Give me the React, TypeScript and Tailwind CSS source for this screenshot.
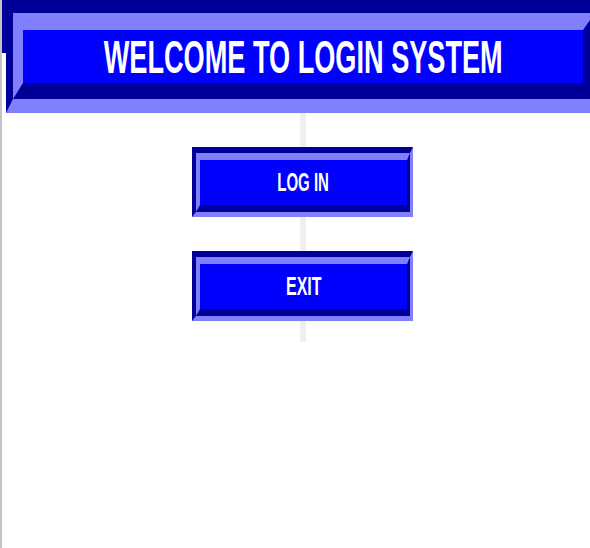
import React from 'react';

const font = { fontFamily: '"Liberation Sans", Arial, sans-serif' };

const BevelButton: React.FC<{ label: string; squeeze: string }> = ({ label, squeeze }) => (
  <button
    className="relative z-10 block border-t-[6px] border-l-[4px] border-b-[5px] border-r-[3px] border-t-[#000099] border-l-[#000099] border-b-[#8080ff] border-r-[#8080ff] p-0"
  >
    <div className="border-t-[7px] border-l-[4px] border-b-[7px] border-r-[3px] border-t-[#8080ff] border-l-[#8080ff] border-b-[#000099] border-r-[#000099]">
      <div className="w-[207px] h-[45px] bg-[#0000ff] flex items-center justify-center">
        <span className={`inline-block text-white font-bold text-[25px] leading-none ${squeeze}`} style={font}>
          {label}
        </span>
      </div>
    </div>
  </button>
);

export default function App() {
  return (
    <div className="w-[590px] h-[548px] overflow-hidden bg-white flex">
      {/* sliver of the window behind */}
      <div className="w-[2px] h-full bg-[#c4c4c4] shrink-0" />

      <div className="relative flex-1 flex flex-col">
        <header className="flex items-start">
          <div className="w-[4px] h-[53px] bg-[#000099] shrink-0" />
          <div className="w-[603px] shrink-0 border-t-[13px] border-l-[7px] border-b-[14px] border-r-[14px] border-t-[#000099] border-l-[#000099] border-b-[#8080ff] border-r-[#8080ff]">
            <div className="border-t-[17px] border-l-[10px] border-b-[16px] border-r-[12px] border-t-[#8080ff] border-l-[#8080ff] border-b-[#000099] border-r-[#000099]">
              <div className="w-[560px] h-[53px] bg-[#0000ff] flex items-center justify-center">
                <h1 className="inline-block text-white font-bold text-[46px] leading-none scale-x-[0.59] whitespace-nowrap" style={font}>
                  WELCOME TO LOGIN SYSTEM
                </h1>
              </div>
            </div>
          </div>
        </header>

        <div className="absolute left-[298px] top-[113px] w-[6px] h-[229px] bg-[#efefef]" />

        <main className="flex flex-col items-start gap-[34px] pt-[34px] pl-[190px]">
          <BevelButton label="LOG IN" squeeze="scale-x-[0.6]" />
          <BevelButton label="EXIT" squeeze="scale-x-[0.64]" />
        </main>
      </div>
    </div>
  );
}
